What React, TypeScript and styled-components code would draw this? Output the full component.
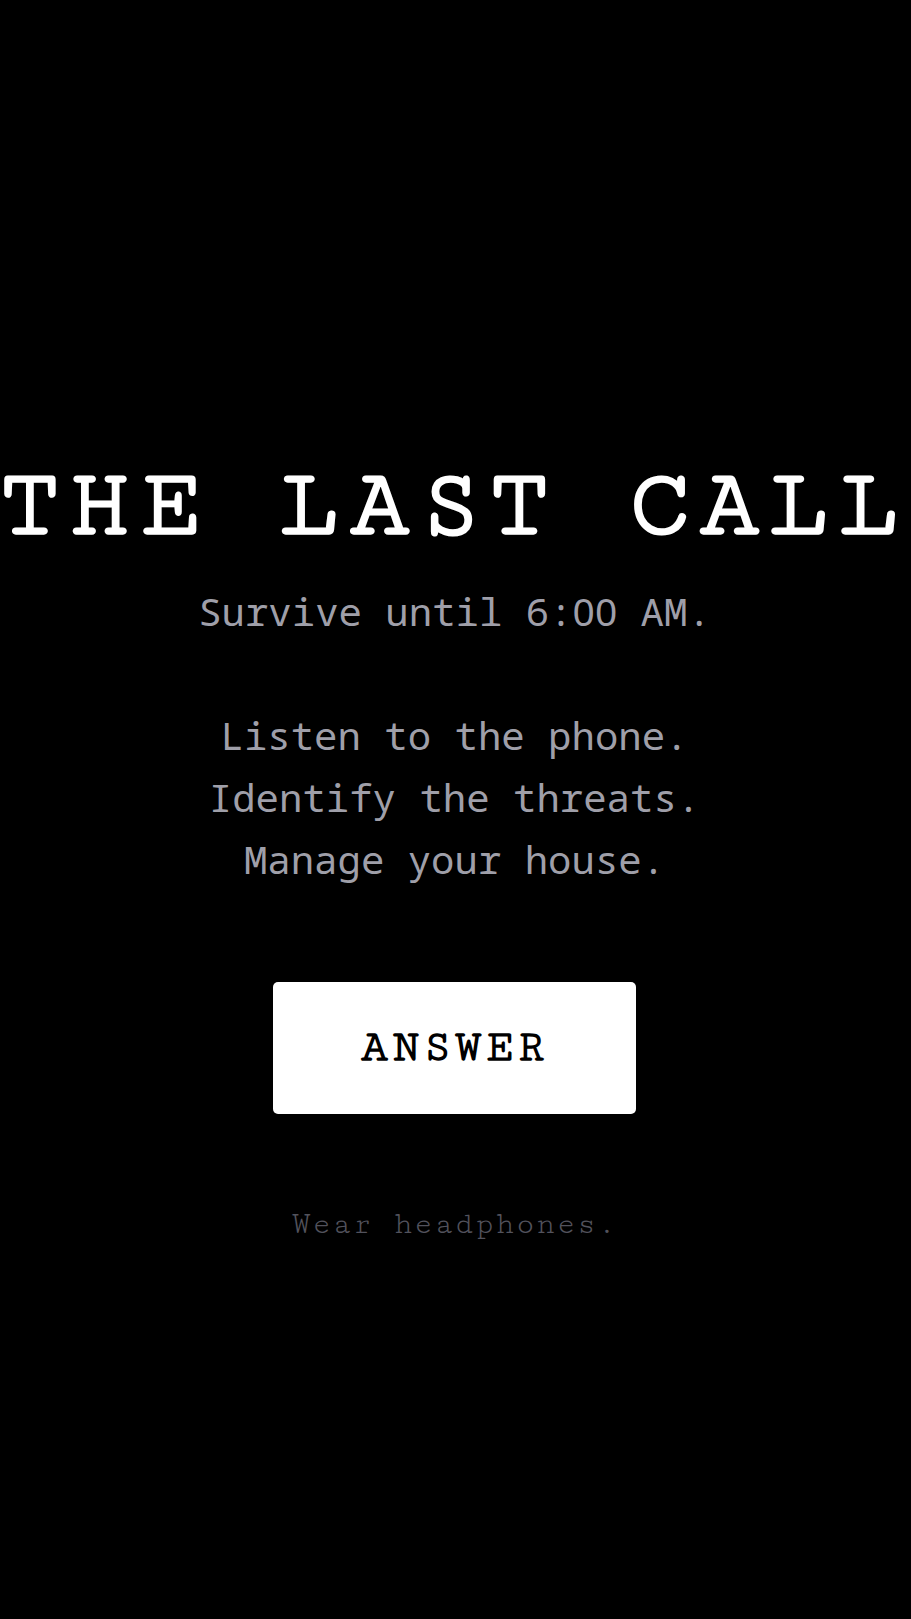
import React from 'react';
import styled, { createGlobalStyle } from 'styled-components';

const typewriter = '"Cutive Mono", "Courier Prime", "Liberation Mono", monospace';

const GlobalStyle = createGlobalStyle`
  * { box-sizing: border-box; margin: 0; }
  body { background: #000; }
`;

const Screen = styled.main`
  min-height: 100vh;
  padding: 82px 2px 0 0;
  display: flex;
  flex-direction: column;
  align-items: center;
  justify-content: center;
  background: #000;
  text-align: center;
  overflow: hidden;
`;

const Title = styled.h1`
  font: 700 99px/100px ${typewriter};
  letter-spacing: 10px;
  white-space: nowrap;
  color: #fff;
`;

const Intro = styled.p`
  margin: 24px 0 92px;
  font: 400 39px/62px "Noto Sans Mono", "DejaVu Sans Mono", monospace;
  color: #9f9fa9;
`;

const PlainDigits = styled.span`
  font-family: "Noto Sans", sans-serif;
`;

const AnswerButton = styled.button`
  padding: 40px 88px;
  border: 0;
  border-radius: 5px;
  background: #fff;
  color: #000;
  font: 700 45px/52px ${typewriter};
  letter-spacing: 4px;
  cursor: pointer;
`;

const Hint = styled.p`
  margin-top: 88px;
  font: 400 32px/44px ${typewriter};
  letter-spacing: 1px;
  color: #52525c;
`;

export default function App() {
  return (
    <Screen>
      <GlobalStyle />
      <Title>THE LAST CALL</Title>
      <Intro>
        Survive until 6:<PlainDigits>00</PlainDigits> AM.<br /><br />
        Listen to the phone.<br />
        Identify the threats.<br />
        Manage your house.
      </Intro>
      <AnswerButton type="button">ANSWER</AnswerButton>
      <Hint>Wear headphones.</Hint>
    </Screen>
  );
}
